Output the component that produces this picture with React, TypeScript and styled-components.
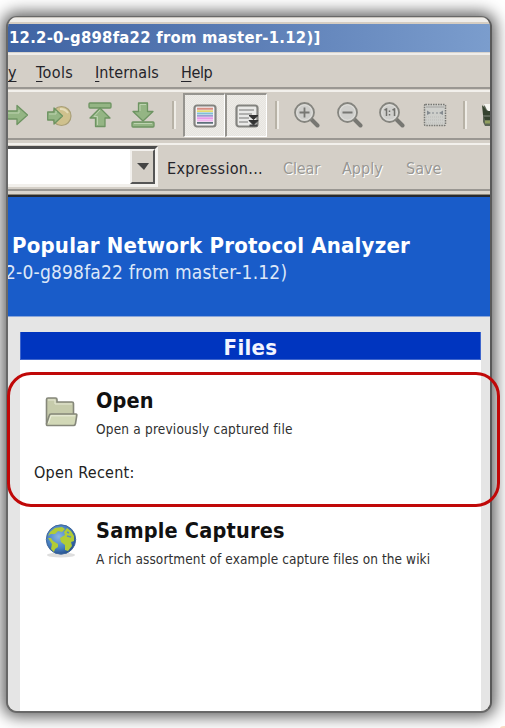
import React from "react";
import styled, { createGlobalStyle } from "styled-components";

const Global = createGlobalStyle`
  * { box-sizing: border-box; }
  html, body { margin: 0; height: 100%; background: #fff; overflow: hidden; }
  body { font-family: "DejaVu Sans Condensed", "DejaVu Sans", sans-serif; font-stretch: condensed; }
  svg { display: block; }
`;

const Page = styled.main`
  position: relative;
  width: 505px;
  height: 728px;
  padding: 16px 0 0 6px;
  overflow: hidden;
`;

const Window = styled.section`
  width: 486px;
  height: 697px;
  border: 2px solid #686868;
  border-top-width: 1px;
  border-right-color: #5a5a5a;
  border-radius: 11px;
  background: #d4cfc7;
  overflow: hidden;
  display: flex;
  flex-direction: column;
  box-shadow: 0 0 15px 4px rgba(0, 0, 0, 0.62);
`;

const Label = styled.span<{ $size?: number; $track?: number; $bold?: boolean }>`
  display: block;
  white-space: pre;
  font-size: ${(p) => p.$size ?? 16}px;
  font-weight: ${(p) => (p.$bold ? 700 : 400)};
  letter-spacing: ${(p) => p.$track ?? 0}px;
`;

const TopFrame = styled.div`
  flex: none;
  height: 7px;
  border-top: 1px solid #c9c5be;
  background: linear-gradient(#efedea 0 4px, #d5cdc2 4px);
`;

const TitleBar = styled.header`
  flex: none;
  height: 28px;
  padding-left: 1px;
  line-height: 28px;
  color: #fff;
  background: linear-gradient(90deg, #3f63a3, #5b7db5 48%, #7b9dcd);
`;

const Groove = styled.div<{ $height: number; $shade: string }>`
  flex: none;
  height: ${(p) => p.$height}px;
  background: ${(p) => p.$shade};
`;

const MenuBar = styled.nav`
  flex: none;
  display: grid;
  grid-template-columns: 28px 59px 86px 1fr;
  height: 32px;
  padding-top: 3px;
  line-height: 29px;
  color: #24242a;
  u { text-decoration-thickness: 1px; text-underline-offset: 3px; }
`;

const ToolBar = styled.div`
  flex: none;
  display: grid;
  grid-template-columns: 39px 41px 43px 41px 11px 42px 50px 19px 43px 42px 44px 40px 19px 8px;
  height: 46px;
  align-items: center;
`;

const Toggle = styled.div`
  width: 42px;
  height: 44px;
  display: grid;
  place-items: center;
  border: 1px solid #fff;
  border-top: 2px solid #96948f;
  border-left: 2px solid #96948f;
  background: repeating-conic-gradient(#e6e4df 0 25%, #eeece8 0 50%) 0 0 / 2px 2px;
`;

const Separator = styled.i`
  width: 4px;
  height: 28px;
  border-left: 2px solid #b7b2a6;
  border-right: 2px solid #eeece6;
`;

const FilterBar = styled.div`
  flex: none;
  display: grid;
  grid-template-columns: 159px 116px 59px 64px 1fr;
  height: 44px;
`;

const Combo = styled.div`
  display: flex;
  width: 150px;
  height: 41px;
  margin-top: 1px;
  border-top: 3px solid #4c4c4c;
  border-right: 3px solid #f5f3f0;
  border-bottom: 3px solid #f2f0ec;
  background: #fff;
`;

const ComboButton = styled.div`
  display: grid;
  place-items: center;
  width: 25px;
  margin-left: auto;
  border: 2px solid #f2f0ed;
  border-right: 2px solid #555;
  border-bottom: 2px solid #555;
  background: #d4cfc7;
`;

const FilterAction = styled.div<{ $disabled?: boolean }>`
  padding-top: 3px;
  line-height: 41px;
  color: ${(p) => (p.$disabled ? "#999894" : "#24242a")};
  text-shadow: ${(p) => (p.$disabled ? "1px 1px 0 #fff" : "none")};
`;

const Hero = styled.div`
  flex: none;
  height: 118px;
  padding-top: 36px;
  color: #fff;
  background: #195cc9;
  line-height: 24px;
  overflow: hidden;
`;

const HeroTitle = styled.div`
  padding-left: 4px;
`;

const HeroVersion = styled.div`
  margin: 3px 0 0 -3px;
  line-height: 22px;
  color: #dce7f8;
`;

const Workspace = styled.div`
  flex: 1;
  display: flex;
  padding: 15px 9px 0 12px;
  border-top: 1px solid #8aa6da;
  background: #e5e5e5;
`;

const Panel = styled.article`
  flex: 1;
  background: #fff;
`;

const PanelHeader = styled.h2`
  display: flex;
  justify-content: center;
  height: 28px;
  margin: 0 0 28px;
  padding-top: 3px;
  line-height: 25px;
  color: #f3f5ff;
  background: #0035bf;
  border: solid #3f66cd;
  border-width: 0 1px 1px;
`;

const Entry = styled.div<{ $iconDrop: number }>`
  display: grid;
  grid-template-columns: 51px 1fr;
  padding-left: 25px;
  color: #111;
  > svg { margin-top: ${(p) => p.$iconDrop}px; }
`;

const EntryTitle = styled.div`
  line-height: 26px;
  margin-bottom: 6px;
`;

const EntryNote = styled.div`
  line-height: 18px;
  color: #303030;
`;

const OpenGroup = styled.div`
  height: 130px;
`;

const Recent = styled.div`
  margin: 25px 0 0 14px;
  line-height: 20px;
  color: #222;
`;

const Callout = styled.div`
  position: absolute;
  left: 7px;
  top: 372px;
  width: 493px;
  height: 135px;
  border: 3px solid #c00808;
  border-radius: 24px;
`;

const CornerMark = styled.i`
  position: absolute;
  left: 500px;
  top: 726px;
  width: 8px;
  height: 5px;
  border-radius: 50%;
  background: #fbd9c2;
`;

const green = { fill: "#94b584", stroke: "#6d9462", strokeWidth: 1.3, strokeLinejoin: "round" as const };

const ForwardIcon = () => (
  <svg width="20" height="24" viewBox="0 0 20 24">
    <path d="M-4 8H9V2.500L19.500 12 9 21.500V16H-4Z" {...green} />
    <path d="M0 10H11V7" fill="none" stroke="#bdd3b0" />
  </svg>
);

const GoToIcon = () => (
  <svg width="26" height="24" viewBox="0 0 26 24">
    <circle cx="14.500" cy="13" r="9.500" fill="#cfc18d" stroke="#a99f77" strokeWidth="1.200" />
    <path d="M13 6a9 9 0 0 1 8 4" fill="none" stroke="#e4dbb8" strokeWidth="2" />
    <path d="M.7 9H7V5L15.500 13 7 21V17H.7Z" {...green} />
    <path d="M2 11h7V8" fill="none" stroke="#bdd3b0" />
  </svg>
);

const TopIcon = () => (
  <svg width="24" height="26" viewBox="0 0 24 26">
    <rect x="1" y="1" width="22" height="5" rx="1" {...green} />
    <path d="M12 6 22 16H17V24.500H7.500V16H2Z" {...green} />
    <path d="M12 8 6 14.500H9.500V23" fill="none" stroke="#bdd3b0" />
  </svg>
);

const BottomIcon = () => (
  <svg width="24" height="26" viewBox="0 0 24 26">
    <rect x="1" y="20" width="22" height="5" rx="1" {...green} />
    <path d="M7.500 1H16.500V9.500H22L12 19 2 9.500H7.500Z" {...green} />
    <path d="M9 9V2.500H15M3 21.500H21" fill="none" stroke="#bdd3b0" />
  </svg>
);

const ColorizeIcon = () => (
  <svg width="24" height="24" viewBox="0 0 24 24">
    <rect x="1.500" y="1.500" width="21" height="21" rx="2.500" fill="#f4f2f5" stroke="#83837f" strokeWidth="2.200" />
    {["#d98d80", "#e5da70", "#80bfd4", "#9d9bd2", "#e99be9", "#f0b6ef", "#5d707a"].map((c, i) => (
      <path key={c} d={`M4 ${4.8 + i * 2.35}H20`} stroke={c} strokeWidth="1.900" />
    ))}
  </svg>
);

const AutoScrollIcon = () => (
  <svg width="24" height="24" viewBox="0 0 24 24">
    <rect x="1.500" y="1.500" width="21" height="21" rx="2.500" fill="#e9e9e7" stroke="#83837f" strokeWidth="2.200" />
    <path d="M4 6H19M4 10H17M4 14H14M4 18H13" stroke="#b0b0ae" strokeWidth="1.800" />
    <path d="M14 11.500H23L18.500 15.500ZM14 16.500H23L18.500 21Z" fill="#333" stroke="#333" />
    <path d="M14.500 21.500H22.500" stroke="#444" strokeWidth="2" />
  </svg>
);

const ZoomIcon = ({ kind }: { kind: "in" | "out" | "one" }) => (
  <svg width="26" height="26" viewBox="0 0 26 26">
    <path d="M17 17 23.500 23.500" stroke="#777772" strokeWidth="4" strokeLinecap="round" />
    <circle cx="10.500" cy="10.500" r="9.500" fill="#cfcfcc" stroke="#85857f" strokeWidth="1.800" />
    <circle cx="10.500" cy="10.500" r="7.700" fill="none" stroke="#e2e1dd" />
    {kind === "one" ? (
      <path d="M5.500 8 7.500 7V14M13.500 8 15.500 7V14M10.500 8.500V10M10.500 12V13.500" fill="none" stroke="#70706c" strokeWidth="1.500" />
    ) : (
      <path d={kind === "in" ? "M5.500 10.500H15.500M10.500 5.500V15.500" : "M5.500 10.500H15.500"} stroke="#777773" strokeWidth="1.800" />
    )}
  </svg>
);

const ResizeIcon = () => (
  <svg width="24" height="24" viewBox="0 0 24 24">
    <rect x="1.500" y="1.500" width="21" height="21" rx="1" fill="#cecfcb" stroke="#777773" strokeWidth="1.500" strokeDasharray="1.500 1" />
    <path d="M3 4H21" stroke="#b8b8b5" strokeWidth="2" />
    <path d="M4 7.500 8 10 4 12ZM20 7.500 16 10 20 12Z" fill="#858b90" />
    <path d="M9 10H11M13 10H15" stroke="#858b90" />
    <path d="M3 14H21M3 17H21M3 20H21" stroke="#bdbdba" strokeDasharray="1 1" />
  </svg>
);

const FilterEditIcon = () => (
  <svg width="8" height="26" viewBox="0 0 8 26">
    <path d="M1 5 4 2H8V24H3L1 20Z" fill="#5c6657" />
    <path d="M2 2H8V10L5 8Z" fill="#f4f4ef" />
    <path d="M0 3 5 9H8V13H1ZM2 15H8V18H3Z" fill="#35432f" />
    <path d="M3 20H8" stroke="#92a060" strokeWidth="3" />
  </svg>
);

const FolderIcon = () => (
  <svg width="34" height="30" viewBox="0 0 34 30">
    <path d="M1.500 27V2.500Q1.500 1 3 1H10.500Q12 1 12 2.500V5H27Q28.500 5 28.500 6.500V18" fill="#c6cbab" stroke="#85877a" strokeWidth="1.600" />
    <path d="M3 3H10V7H27" fill="none" stroke="#e6e8d5" />
    <path d="M1.500 27 4.200 18.500Q4.500 17 6 17H31Q32 17 31.800 18.500L30.500 26.500Q30.200 28.500 28.500 28.500H3Q1 28.500 1.500 27Z" fill="#d2d8b7" stroke="#85877a" strokeWidth="1.600" />
    <path d="M3.500 26 6 18.800H30" fill="none" stroke="#edf0dd" />
  </svg>
);

const GlobeIcon = () => (
  <svg width="32" height="34" viewBox="0 0 32 34">
    <defs>
      <radialGradient id="sea" cx=".42" cy=".4" r=".62">
        <stop offset="0" stopColor="#88b4e2" />
        <stop offset=".65" stopColor="#4780c2" />
        <stop offset="1" stopColor="#254f8c" />
      </radialGradient>
    </defs>
    <ellipse cx="16" cy="31" rx="14" ry="2.500" fill="#dedede" />
    <circle cx="16" cy="15.500" r="14.700" fill="url(#sea)" stroke="#42699b" />
    <path d="M3 12 5 8 10 4 17 3 20 5 17 8 13 7 10 10 6 10Z" fill="#b2cc35" />
    <path d="M3 14 6 14 8 17 13 20 13 23 10 25 9 28 6 25 7 20Z" fill="#b2cc35" />
    <path d="M22 4 26 7 29 12 29 17 26 18 27 22 23 27 20 26 20 21 16 18 15 14 20 11 19 8Z" fill="#b2cc35" />
    <path d="M22 12 26 13M22 8 24 9" stroke="#598dc0" strokeWidth="1.500" />
  </svg>
);

export default function App() {
  return (
    <>
      <Global />
      <Page>
        <Window>
          <TopFrame />
          <TitleBar>
            <Label $size={16.5} $track={0.25} $bold>12.2-0-g898fa22 from master-1.12)]</Label>
          </TitleBar>
          <Groove $height={3} $shade="linear-gradient(#d8d4ce 1px, #efedea 1px)" />
          <MenuBar>
            <Label><u>y</u></Label>
            <Label $track={0.4}><u>T</u>ools</Label>
            <Label $track={0.1}><u>I</u>nternals</Label>
            <Label $track={-0.4}><u>H</u>elp</Label>
          </MenuBar>
          <Groove $height={5} $shade="linear-gradient(#9a9792 2px, #d4cfc7 2px 3px, #f2f0ec 3px)" />
          <ToolBar>
            <ForwardIcon />
            <GoToIcon />
            <TopIcon />
            <BottomIcon />
            <Separator />
            <Toggle><ColorizeIcon /></Toggle>
            <Toggle><AutoScrollIcon /></Toggle>
            <Separator />
            <ZoomIcon kind="in" />
            <ZoomIcon kind="out" />
            <ZoomIcon kind="one" />
            <ResizeIcon />
            <Separator />
            <FilterEditIcon />
          </ToolBar>
          <Groove $height={7} $shade="linear-gradient(#9a9792 2px, #d4cfc7 2px 5px, #f2f0ec 5px)" />
          <FilterBar>
            <Combo>
              <ComboButton>
                <svg width="12" height="8" viewBox="0 0 12 8"><path d="M0 0H12L7 7Z" fill="#444" /></svg>
              </ComboButton>
            </Combo>
            <FilterAction><Label $track={0.32}>Expression...</Label></FilterAction>
            <FilterAction $disabled><Label $track={-0.1}>Clear</Label></FilterAction>
            <FilterAction $disabled><Label>Apply</Label></FilterAction>
            <FilterAction $disabled><Label>Save</Label></FilterAction>
          </FilterBar>
          <Groove $height={9} $shade="linear-gradient(#9a9792 2px, #d9d4cc 2px 5px, #8c8678 5px 6px, #262a30 6px 8px, #195cc9 8px)" />
          <Hero>
            <HeroTitle><Label $size={22} $track={0.2} $bold>Popular Network Protocol Analyzer</Label></HeroTitle>
            <HeroVersion><Label $size={19} $track={0.2}>2-0-g898fa22 from master-1.12)</Label></HeroVersion>
          </Hero>
          <Workspace>
            <Panel>
              <PanelHeader><Label $size={22} $track={0.3} $bold>Files</Label></PanelHeader>
              <OpenGroup>
                <Entry $iconDrop={9}>
                  <FolderIcon />
                  <div>
                    <EntryTitle><Label $size={21.5} $track={0.1} $bold>Open</Label></EntryTitle>
                    <EntryNote><Label $size={13.5} $track={0.2}>Open a previously captured file</Label></EntryNote>
                  </div>
                </Entry>
                <Recent><Label $track={0.25}>Open Recent:</Label></Recent>
              </OpenGroup>
              <Entry $iconDrop={6}>
                <GlobeIcon />
                <div>
                  <EntryTitle><Label $size={21.5} $track={0.2} $bold>Sample Captures</Label></EntryTitle>
                  <EntryNote><Label $size={13.5} $track={0.1}>A rich assortment of example capture files on the wiki</Label></EntryNote>
                </div>
              </Entry>
            </Panel>
          </Workspace>
        </Window>
        <Callout />
        <CornerMark />
      </Page>
    </>
  );
}
